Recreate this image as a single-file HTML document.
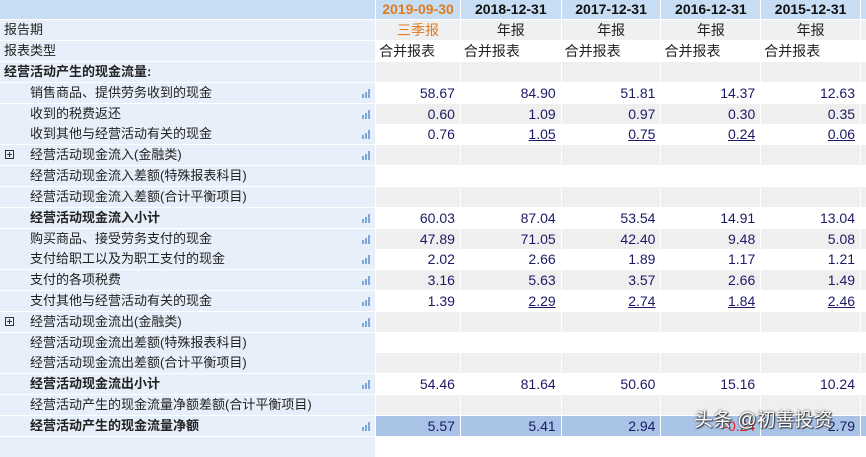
<!DOCTYPE html>
<html><head><meta charset="utf-8"><style>
*{margin:0;padding:0;box-sizing:border-box}
body{width:866px;height:442px;overflow:hidden;background:#fff;font-family:"Liberation Sans","Noto Sans CJK SC",sans-serif;font-size:13px;color:#222;position:relative}
.r{position:absolute;left:0;width:866px;height:20px;display:flex}
.l{width:376px;height:20px;background:#e7effa;position:relative;line-height:20px;white-space:nowrap}
.l span{position:absolute;top:0;left:30px}
.l span.t{left:4px}
.c{height:20px;line-height:20px;text-align:right;padding-right:5px;color:#1c1a66;margin-left:1px;font-size:14px}
.c1{width:84px}.c2{width:100px}.c3{width:99px}.c4{width:99px}.c5{width:99px}.c6{width:5px;padding:0}
.g .c{background:#efefef}
.w .c{background:#fff}
.s .c{background:#a9c3e7}
.b{font-weight:bold}
.u{text-decoration:underline}
.neg{color:#e02020}
.bar{position:absolute;left:362px;top:6px;width:9px;height:9px}
.bar i{position:absolute;bottom:0;width:2px;background:#7fa6d8}
.bar i:nth-child(1){left:0;height:4px}.bar i:nth-child(2){left:3px;height:6px}.bar i:nth-child(3){left:6px;height:9px}
.plus{position:absolute;left:5px;top:5px;width:9px;height:9px;border:1px solid #333}
.plus:before{content:"";position:absolute;left:1px;top:3px;width:5px;height:1px;background:#333}
.plus:after{content:"";position:absolute;left:3px;top:1px;width:1px;height:5px;background:#333}
.hd .c{background:#c7ddf3;height:19px;line-height:19px;text-align:center;padding:0;color:#111;font-weight:bold}
.rp .c{background:#eef0f2;text-align:center;padding:0;color:#222}
.tp .c{text-align:left;padding-left:3px;color:#222;background:#fff}
</style></head><body>
<div class="r hd" style="top:0;height:19px">
<div class="l" style="background:#c7ddf3;height:19px"></div>
<div class="c c1" style="color:#e07b1e">2019-09-30</div>
<div class="c c2">2018-12-31</div><div class="c c3">2017-12-31</div><div class="c c4">2016-12-31</div><div class="c c5">2015-12-31</div><div class="c c6"></div>
</div>
<div class="r rp" style="top:20px">
<div class="l"><span class="t">报告期</span></div>
<div class="c c1" style="color:#e07b1e">三季报</div><div class="c c2">年报</div><div class="c c3">年报</div><div class="c c4">年报</div><div class="c c5">年报</div><div class="c c6"></div>
</div>
<div class="r tp" style="top:41px">
<div class="l"><span class="t">报表类型</span></div>
<div class="c c1">合并报表</div><div class="c c2">合并报表</div><div class="c c3">合并报表</div><div class="c c4">合并报表</div><div class="c c5">合并报表</div><div class="c c6"></div>
</div>

<div class="r g" style="top:62px"><div class="l"><span class="t b">经营活动产生的现金流量:</span></div><div class="c c1"></div><div class="c c2"></div><div class="c c3"></div><div class="c c4"></div><div class="c c5"></div><div class="c c6"></div></div>
<div class="r w" style="top:83px"><div class="l"><span>销售商品、提供劳务收到的现金</span><div class="bar"><i></i><i></i><i></i></div></div><div class="c c1">58.67</div><div class="c c2">84.90</div><div class="c c3">51.81</div><div class="c c4">14.37</div><div class="c c5">12.63</div><div class="c c6"></div></div>
<div class="r g" style="top:104px"><div class="l"><span>收到的税费返还</span><div class="bar"><i></i><i></i><i></i></div></div><div class="c c1">0.60</div><div class="c c2">1.09</div><div class="c c3">0.97</div><div class="c c4">0.30</div><div class="c c5">0.35</div><div class="c c6"></div></div>
<div class="r w" style="top:124px"><div class="l"><span>收到其他与经营活动有关的现金</span><div class="bar"><i></i><i></i><i></i></div></div><div class="c c1">0.76</div><div class="c c2 u">1.05</div><div class="c c3 u">0.75</div><div class="c c4 u">0.24</div><div class="c c5 u">0.06</div><div class="c c6"></div></div>
<div class="r g" style="top:145px"><div class="l"><div class="plus"></div><span>经营活动现金流入(金融类)</span><div class="bar"><i></i><i></i><i></i></div></div><div class="c c1"></div><div class="c c2"></div><div class="c c3"></div><div class="c c4"></div><div class="c c5"></div><div class="c c6"></div></div>
<div class="r w" style="top:166px"><div class="l"><span>经营活动现金流入差额(特殊报表科目)</span></div><div class="c c1"></div><div class="c c2"></div><div class="c c3"></div><div class="c c4"></div><div class="c c5"></div><div class="c c6"></div></div>
<div class="r g" style="top:187px"><div class="l"><span>经营活动现金流入差额(合计平衡项目)</span></div><div class="c c1"></div><div class="c c2"></div><div class="c c3"></div><div class="c c4"></div><div class="c c5"></div><div class="c c6"></div></div>
<div class="r w" style="top:208px"><div class="l"><span class="b">经营活动现金流入小计</span><div class="bar"><i></i><i></i><i></i></div></div><div class="c c1">60.03</div><div class="c c2">87.04</div><div class="c c3">53.54</div><div class="c c4">14.91</div><div class="c c5">13.04</div><div class="c c6"></div></div>
<div class="r g" style="top:229px"><div class="l"><span>购买商品、接受劳务支付的现金</span><div class="bar"><i></i><i></i><i></i></div></div><div class="c c1">47.89</div><div class="c c2">71.05</div><div class="c c3">42.40</div><div class="c c4">9.48</div><div class="c c5">5.08</div><div class="c c6"></div></div>
<div class="r w" style="top:249px"><div class="l"><span>支付给职工以及为职工支付的现金</span><div class="bar"><i></i><i></i><i></i></div></div><div class="c c1">2.02</div><div class="c c2">2.66</div><div class="c c3">1.89</div><div class="c c4">1.17</div><div class="c c5">1.21</div><div class="c c6"></div></div>
<div class="r g" style="top:270px"><div class="l"><span>支付的各项税费</span><div class="bar"><i></i><i></i><i></i></div></div><div class="c c1">3.16</div><div class="c c2">5.63</div><div class="c c3">3.57</div><div class="c c4">2.66</div><div class="c c5">1.49</div><div class="c c6"></div></div>
<div class="r w" style="top:291px"><div class="l"><span>支付其他与经营活动有关的现金</span><div class="bar"><i></i><i></i><i></i></div></div><div class="c c1">1.39</div><div class="c c2 u">2.29</div><div class="c c3 u">2.74</div><div class="c c4 u">1.84</div><div class="c c5 u">2.46</div><div class="c c6"></div></div>
<div class="r g" style="top:312px"><div class="l"><div class="plus"></div><span>经营活动现金流出(金融类)</span><div class="bar"><i></i><i></i><i></i></div></div><div class="c c1"></div><div class="c c2"></div><div class="c c3"></div><div class="c c4"></div><div class="c c5"></div><div class="c c6"></div></div>
<div class="r w" style="top:333px"><div class="l"><span>经营活动现金流出差额(特殊报表科目)</span></div><div class="c c1"></div><div class="c c2"></div><div class="c c3"></div><div class="c c4"></div><div class="c c5"></div><div class="c c6"></div></div>
<div class="r g" style="top:353px"><div class="l"><span>经营活动现金流出差额(合计平衡项目)</span></div><div class="c c1"></div><div class="c c2"></div><div class="c c3"></div><div class="c c4"></div><div class="c c5"></div><div class="c c6"></div></div>
<div class="r w" style="top:374px"><div class="l"><span class="b">经营活动现金流出小计</span><div class="bar"><i></i><i></i><i></i></div></div><div class="c c1">54.46</div><div class="c c2">81.64</div><div class="c c3">50.60</div><div class="c c4">15.16</div><div class="c c5">10.24</div><div class="c c6"></div></div>
<div class="r g" style="top:395px"><div class="l"><span>经营活动产生的现金流量净额差额(合计平衡项目)</span></div><div class="c c1"></div><div class="c c2"></div><div class="c c3"></div><div class="c c4"></div><div class="c c5"></div><div class="c c6"></div></div>
<div class="r s" style="top:416px"><div class="l"><span class="b">经营活动产生的现金流量净额</span><div class="bar"><i></i><i></i><i></i></div></div><div class="c c1">5.57</div><div class="c c2">5.41</div><div class="c c3">2.94</div><div class="c c4 neg">-0.24</div><div class="c c5">2.79</div><div class="c c6"></div></div>
<div class="r w" style="top:437px"><div class="l"></div><div class="c c1"></div><div class="c c2"></div><div class="c c3"></div><div class="c c4"></div><div class="c c5"></div><div class="c c6"></div></div>

<div style="position:absolute;left:694px;top:405px;font-size:19px;color:#fff;text-shadow:0 0 2px #333,1px 1px 1px #333;white-space:nowrap">头条 @初善投资</div>
</body></html>
